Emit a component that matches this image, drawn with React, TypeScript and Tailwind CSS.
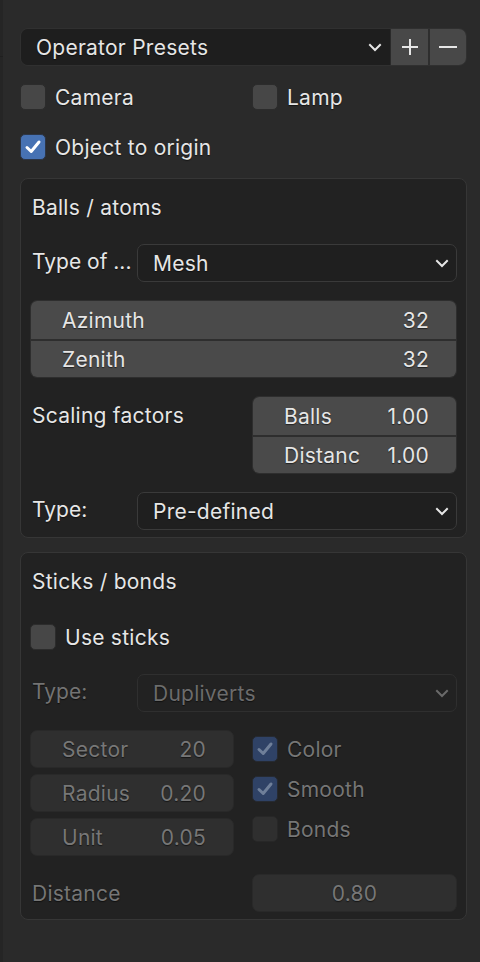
import type { ReactNode } from 'react';
import { clsx } from 'clsx';

const SHADOW = '[text-shadow:0_1px_1px_rgba(0,0,0,0.55)]';
const TXT = 'text-[21px] leading-none tracking-[0.25px]';

function Chevron({ dim }: { dim?: boolean }) {
    return (
        <svg width="14" height="9" viewBox="0 0 14 9" className="shrink-0">
            <path
                d="M2 2 L7 7 L12 2"
                fill="none"
                stroke={dim ? '#6a6a6a' : '#e6e6e6'}
                strokeWidth="2"
                strokeLinecap="square"
            />
        </svg>
    );
}

function Check({ dim }: { dim?: boolean }) {
    return (
        <svg width="20" height="20" viewBox="0 0 20 20">
            <path
                d="M4 10.5 L8.2 14.5 L16 5"
                fill="none"
                stroke={dim ? '#6f7f99' : '#ffffff'}
                strokeWidth="3"
                strokeLinecap="round"
                strokeLinejoin="round"
            />
        </svg>
    );
}

function Checkbox({
    label,
    checked,
    dim,
}: {
    label: string;
    checked?: boolean;
    dim?: boolean;
}) {
    return (
        <div className="flex items-center h-[26px]">
            <div
                className={clsx(
                    'w-[26px] h-[26px] rounded-[5px] border flex items-center justify-center shrink-0',
                    checked
                        ? dim
                            ? 'bg-[#2f4266] border-[#262a31]'
                            : 'bg-[#4772b3] border-[#2c3546]'
                        : dim
                          ? 'bg-[#2f2f2f] border-[#272727]'
                          : 'bg-[#474747] border-[#2c2c2c]',
                )}
            >
                {checked && <Check dim={dim} />}
            </div>
            <span
                className={clsx(
                    'ml-[9px]',
                    TXT,
                    SHADOW,
                    dim ? 'text-[#767676]' : 'text-[#e6e6e6]',
                )}
            >
                {label}
            </span>
        </div>
    );
}

function Dropdown({ value, dim }: { value: string; dim?: boolean }) {
    return (
        <div
            className={clsx(
                'flex-1 h-[38px] rounded-[7px] border flex items-center pl-[15px] pr-[7px]',
                dim
                    ? 'bg-[#222222] border-[#2f2f2f]'
                    : 'bg-[#1f1f1f] border-[#3a3a3a]',
            )}
        >
            <span
                className={clsx(
                    'flex-1',
                    TXT,
                    SHADOW,
                    dim ? 'text-[#6c6c6c]' : 'text-[#e6e6e6]',
                )}
            >
                {value}
            </span>
            <Chevron dim={dim} />
        </div>
    );
}

function LabelRow({
    label,
    dim,
    children,
}: {
    label: string;
    dim?: boolean;
    children: ReactNode;
}) {
    return (
        <div className="flex items-center h-[38px]">
            <div className="w-[107px] shrink-0 pl-[2px]">
                <span
                    className={clsx(
                        'whitespace-nowrap text-[21px] leading-none',
                        SHADOW,
                        dim ? 'text-[#737373]' : 'text-[#e6e6e6]',
                    )}
                >
                    {label}
                </span>
            </div>
            {children}
        </div>
    );
}

function FieldRow({
    label,
    value,
    top,
}: {
    label: string;
    value: string;
    top?: boolean;
}) {
    return (
        <div
            className={clsx(
                'h-[38px] flex items-center bg-[#4a4a4a] text-[#e6e6e6] pl-[31px] pr-[27px]',
                TXT,
                SHADOW,
                !top && 'border-t-[2px] border-[#2e2e2e]',
            )}
        >
            <span className="flex-1">{label}</span>
            <span>{value}</span>
        </div>
    );
}

function DimField({ label, value }: { label: string; value: string }) {
    return (
        <div
            className={clsx(
                'h-[38px] rounded-[7px] border border-[#292929] bg-[#2f2f2f] flex items-center pl-[31px] pr-[27px] text-[#777777]',
                TXT,
                SHADOW,
            )}
        >
            <span className="flex-1">{label}</span>
            <span>{value}</span>
        </div>
    );
}

function Panel({ title, children }: { title: string; children: ReactNode }) {
    return (
        <div className="rounded-[8px] border border-[#363636] bg-[#222222] px-[9px] pt-[9px] pb-[7px]">
            <div className="h-[38px] flex items-center">
                <span className={clsx('pl-[2px] text-[#e6e6e6]', TXT, SHADOW)}>
                    {title}
                </span>
            </div>
            {children}
        </div>
    );
}

export default function App() {
    return (
        <div
            className="w-[480px] h-[962px] bg-[#2a2a2a] flex overflow-hidden"
            style={{ fontFamily: 'Inter, "Noto Sans", sans-serif' }}
        >
            <div className="w-[3px] shrink-0 bg-[#252525] flex flex-col">
                <div className="h-[57px] border-b border-[#1f1f1f]" />
            </div>
            <div className="flex-1 pl-[17px] pr-[13px] pt-[28px]">
                {/* presets */}
                <div className="flex h-[38px] rounded-[8px] border border-[#303030] overflow-hidden">
                    <div className="flex-1 bg-[#1e1e1e] flex items-center pl-[15px] pr-[8px]">
                        <span className={clsx('flex-1 text-[#e6e6e6]', TXT, SHADOW)}>
                            Operator Presets
                        </span>
                        <Chevron />
                    </div>
                    <div className="w-[38px] bg-[#484848] flex items-center justify-center border-l border-[#2a2a2a]">
                        <svg width="18" height="18" viewBox="0 0 18 18">
                            <path
                                d="M9 1 V17 M1 9 H17"
                                stroke="#e6e6e6"
                                strokeWidth="2"
                            />
                        </svg>
                    </div>
                    <div className="w-[38px] bg-[#484848] flex items-center justify-center border-l-2 border-[#2e2e2e]">
                        <svg width="18" height="4" viewBox="0 0 18 4">
                            <path d="M0 2 H18" stroke="#e6e6e6" strokeWidth="2" />
                        </svg>
                    </div>
                </div>

                <div className="flex mt-[18px]">
                    <div className="w-[232px]">
                        <Checkbox label="Camera" />
                    </div>
                    <Checkbox label="Lamp" />
                </div>
                <div className="mt-[24px]">
                    <Checkbox label="Object to origin" checked />
                </div>

                <div className="mt-[18px]">
                    <Panel title="Balls / atoms">
                        <div className="mt-[18px]">
                            <LabelRow label="Type of ...">
                                <Dropdown value="Mesh" />
                            </LabelRow>
                        </div>
                        <div className="mt-[18px] rounded-[7px] border border-[#2e2e2e] overflow-hidden">
                            <FieldRow label="Azimuth" value="32" top />
                            <FieldRow label="Zenith" value="32" />
                        </div>
                        <div className="mt-[18px] flex">
                            <div className="w-[222px] h-[38px] flex items-center pl-[2px]">
                                <span className={clsx('text-[#e6e6e6]', TXT, SHADOW)}>
                                    Scaling factors
                                </span>
                            </div>
                            <div className="flex-1 rounded-[7px] border border-[#2e2e2e] overflow-hidden">
                                <FieldRow label="Balls" value="1.00" top />
                                <FieldRow label="Distanc" value="1.00" />
                            </div>
                        </div>
                        <div className="mt-[18px]">
                            <LabelRow label="Type:">
                                <Dropdown value="Pre-defined" />
                            </LabelRow>
                        </div>
                    </Panel>
                </div>

                <div className="mt-[14px]">
                    <Panel title="Sticks / bonds">
                        <div className="mt-[18px] h-[38px] flex items-center">
                            <Checkbox label="Use sticks" />
                        </div>
                        <div className="mt-[18px]">
                            <LabelRow label="Type:" dim>
                                <Dropdown value="Dupliverts" dim />
                            </LabelRow>
                        </div>
                        <div className="mt-[18px] flex">
                            <div className="w-[204px] flex flex-col gap-[6px]">
                                <DimField label="Sector" value="20" />
                                <DimField label="Radius" value="0.20" />
                                <DimField label="Unit" value="0.05" />
                            </div>
                            <div className="ml-[18px] flex flex-col gap-[14px] pt-[6px]">
                                <Checkbox label="Color" checked dim />
                                <Checkbox label="Smooth" checked dim />
                                <Checkbox label="Bonds" dim />
                            </div>
                        </div>
                        <div className="mt-[18px] flex items-center h-[38px]">
                            <span
                                className={clsx(
                                    'w-[222px] pl-[2px] text-[#767676]',
                                    TXT,
                                    SHADOW,
                                )}
                            >
                                Distance
                            </span>
                            <div
                                className={clsx(
                                    'flex-1 h-[38px] rounded-[7px] border border-[#292929] bg-[#2f2f2f] flex items-center justify-center text-[#777777]',
                                    TXT,
                                    SHADOW,
                                )}
                            >
                                0.80
                            </div>
                        </div>
                    </Panel>
                </div>
            </div>
        </div>
    );
}
